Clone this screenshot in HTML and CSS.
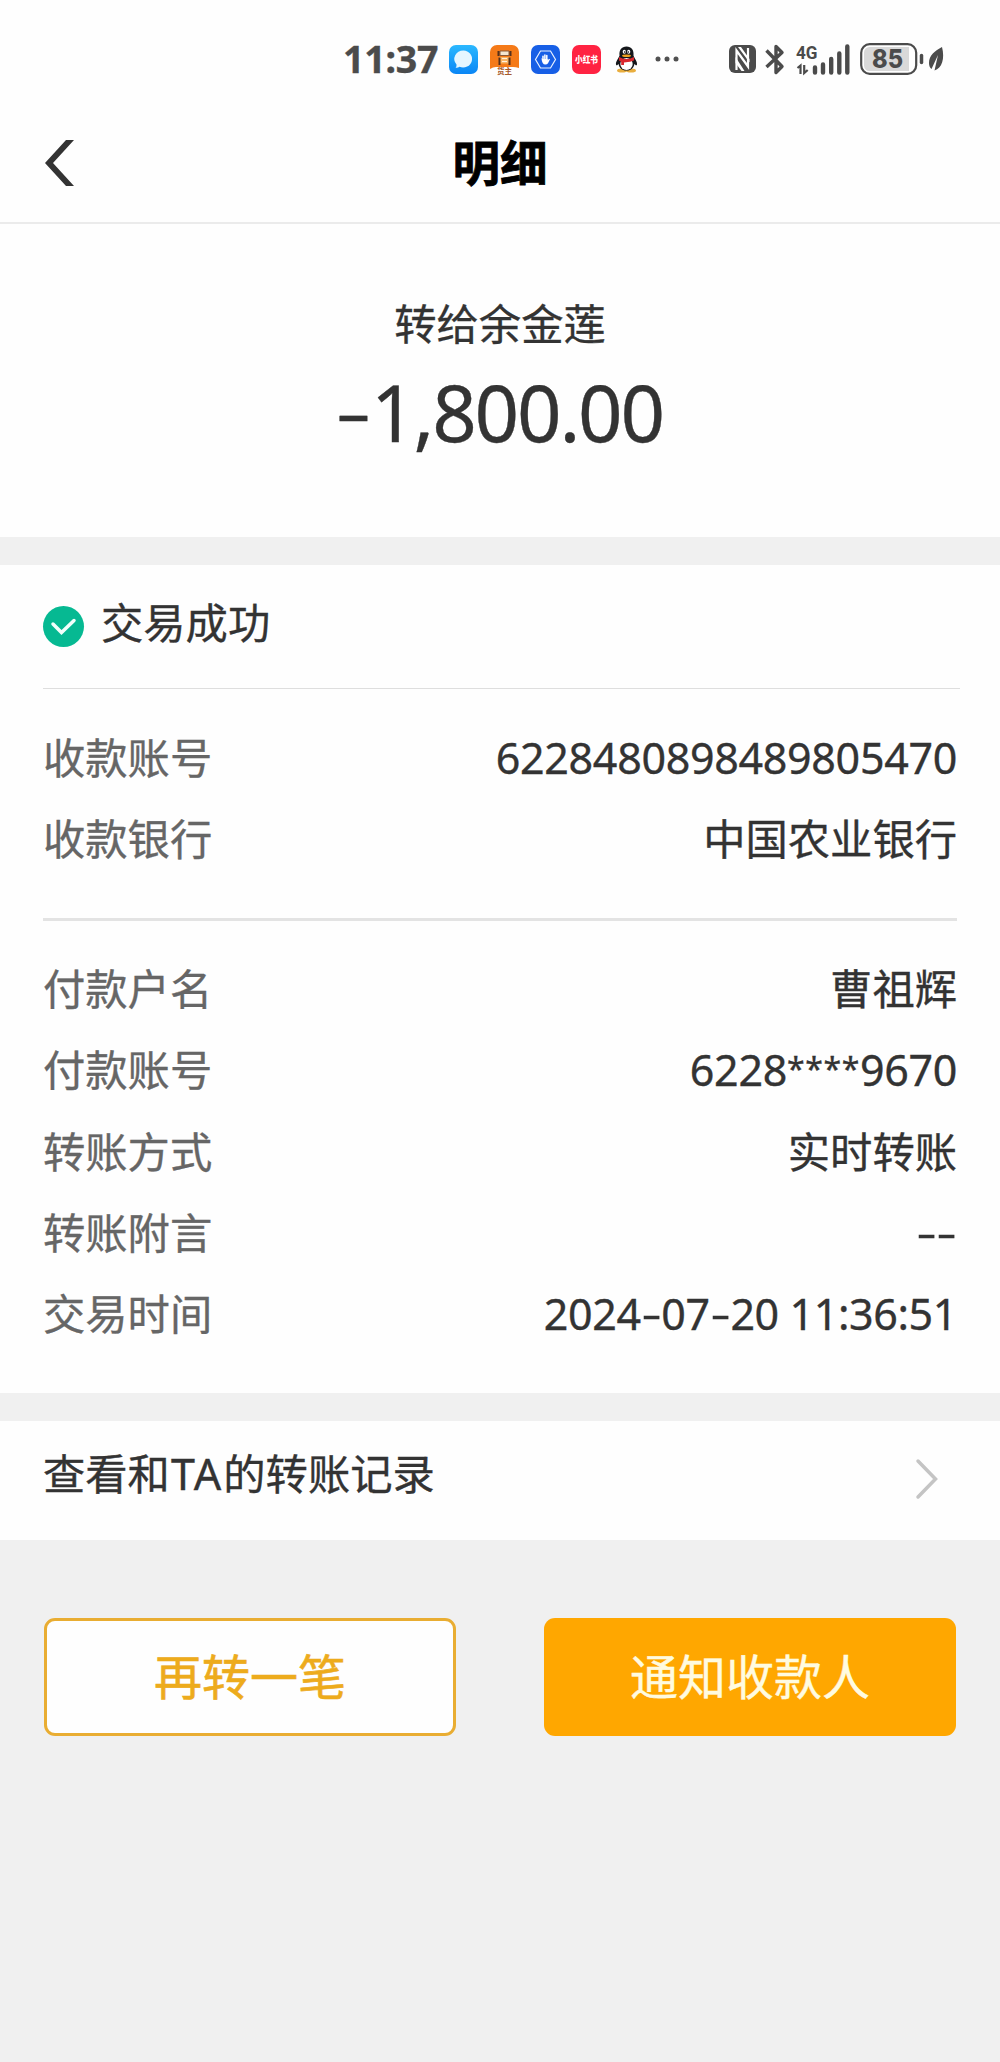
FILE: index.html
```html
<!DOCTYPE html>
<html lang="zh-CN">
<head>
<meta charset="utf-8">
<title>明细</title>
<link rel="stylesheet" href="styles.css">
</head>
<body>
<div class="status">
  <span class="time">11:37</span>
  <div class="apps">
    <svg width="29" height="29" viewBox="0 0 29 29">
      <defs><linearGradient id="msg" x1="0" y1="0" x2="0" y2="1"><stop offset="0" stop-color="#2bb8ff"/><stop offset="1" stop-color="#0a86f5"/></linearGradient></defs>
      <rect width="29" height="29" rx="7" fill="url(#msg)"/>
      <path d="M14.5 5.5a9 8.5 0 1 1-4 16.3Q8.800 23 6.600 22.700 7.900 21.300 7.500 19.500A9 8.500 0 0 1 14.500 5.500z" fill="#e6f6ff"/>
    </svg>
    <svg width="29" height="29" viewBox="0 0 29 29">
      <path d="M7 0h15a7 7 0 0 1 7 7v16q-3-1-6-1H6q-3 0-6 2V7a7 7 0 0 1 7-7z" fill="#f57a18"/>
      <path d="M10 6h9v4.500h-9z" fill="#f5e6d0" stroke="#8a5a3a" stroke-width="1"/>
      <path d="M9.500 12h10v6.500h-10z" fill="#f9b565"/>
      <path d="M8.500 6v5M20.500 6v5M9.500 12.500v7.500M19.500 12.500v7.500" stroke="#55301c" stroke-width="2"/>
      <path d="M12 13.500h5M12 16.500h5" stroke="#fff0df" stroke-width="1.200"/>
      <text x="14.500" y="28.500" text-anchor="middle" class="truck-name">货主</text>
    </svg>
    <svg width="29" height="29" viewBox="0 0 29 29">
      <rect width="29" height="29" rx="7" fill="#175fe6"/>
      <path d="M9.500 6h10l5 8.500-5 8.500h-10l-5-8.500z" fill="none" stroke="#e8f1ff" stroke-width="1.200"/>
      <path d="M12 15v-3.800M13.900 15v-5M15.800 15v-4.500" fill="none" stroke="#fff" stroke-width="1.500" stroke-linecap="round"/>
      <path d="M10.500 13.500q.7-.5 1 .5h5.200v1.500l1.300-1.700 1 .4-2 4q-.8 1.300-2.700 1.300-3.300 0-3.800-6z" fill="#fff"/>
    </svg>
    <svg width="29" height="29" viewBox="0 0 29 29">
      <rect width="29" height="29" rx="7" fill="#ff2342"/>
      <text x="14.500" y="17.800" text-anchor="middle" class="red-name" textLength="23" lengthAdjust="spacingAndGlyphs">小红书</text>
    </svg>
    <svg class="qq" width="23" height="29" viewBox="0 0 23 29">
      <ellipse cx="7" cy="25.500" rx="5" ry="2" fill="#e9ae3e"/><ellipse cx="16" cy="25.500" rx="5" ry="2" fill="#e9ae3e"/>
      <path d="M11.500 1.500c5 0 7.500 3.500 7 9 1 3 4 6 3.500 9-.5 2-2 0-2.500-.5-1 4-3 6.500-8 6.500s-7-2.500-8-6.500c-.5.5-2 2.500-2.500.5-.5-3 2.500-6 3.500-9-.500-5.500 2-9 7-9z" fill="#15171b"/>
      <ellipse cx="11.500" cy="19" rx="6.200" ry="6" fill="#fff"/>
      <ellipse cx="9.300" cy="6.700" rx="1.600" ry="2" fill="#fff"/><ellipse cx="13.700" cy="6.700" rx="1.600" ry="2" fill="#fff"/>
      <circle cx="9.700" cy="7" r=".8"/><circle cx="13.300" cy="7" r=".8"/>
      <ellipse cx="11.500" cy="10.700" rx="4.500" ry="1.300" fill="#f0a31f"/>
      <path d="M4 12q7.500 4 15 0v3.500q-4 1.700-8 1.700l-2 .2v2.500H6.200v-3.200L4 15.500z" fill="#d9272e"/>
    </svg>
    <svg class="more" width="24" height="29" viewBox="0 0 24 29" fill="#505050"><circle cx="3" cy="14" r="2.500"/><circle cx="12" cy="14" r="2.500"/><circle cx="21" cy="14" r="2.500"/></svg>
  </div>
  <div class="system">
    <svg width="27" height="28" viewBox="0 0 27 28">
      <rect width="27" height="28" rx="6" fill="#4b4b4b"/>
      <path d="M7.500 25V5.500L19 21.500V3" fill="none" stroke="#fff" stroke-width="2.200"/>
      <path d="M9 2h3l8.500 12v3.500zM6.500 12l9 14h-3l-6-8z" fill="#fff"/>
    </svg>
    <svg class="bt" width="20" height="31" viewBox="0 0 20 31"><path d="M1.500 6.500 17 22.500l-6 6v-26l6 6L1.500 23" fill="none" stroke="#4b4b4b" stroke-width="3.400" stroke-linejoin="round"/></svg>
    <svg class="signal" width="54" height="31" viewBox="0 0 54 31">
      <text x="0" y="14.500" class="net" textLength="21.500" lengthAdjust="spacingAndGlyphs">4G</text>
      <path d="M1.500 24 4.500 21.500V30M8.200 21v8l3.500-3" fill="none" stroke="#4b4b4b" stroke-width="2.200"/>
      <path d="M19 23.500v5M27 20.500v8M35.200 15v13.500M43.300 9.500v19M51.300 2.500v26" stroke="#4b4b4b" stroke-width="4.400" stroke-linecap="round"/>
    </svg>
    <svg class="battery" width="64" height="32" viewBox="0 0 64 32">
      <rect x="1.200" y="1.200" width="55" height="29.600" rx="8.500" fill="#fff" stroke="#4b4b4b" stroke-width="2.200"/>
      <path d="M9.500 4H49v24H9.500A5.500 5.500 0 0 1 4 22.500v-13A5.500 5.500 0 0 1 9.500 4z" fill="#d9d9d9"/>
      <text x="27.500" y="25" text-anchor="middle" class="charge" textLength="31" lengthAdjust="spacingAndGlyphs">85</text>
      <path d="M61.500 12.500v7" stroke="#4b4b4b" stroke-width="3.500" stroke-linecap="round"/>
    </svg>
    <svg class="leaf" width="16" height="26" viewBox="0 0 16 26"><path d="M14 1C7 5 1 9 1 17c0 3 1 5 2.500 6L10 9 6.500 24.500C14 22 17 13 14 1z" fill="#4b4b4b"/></svg>
  </div>
</div>
<header class="nav">
  <svg class="back" width="29" height="46" viewBox="0 0 29 46"><path d="M21 0h8L8 23l21 23h-8L0 23z" fill="#333"/></svg>
  <h1>明细</h1>
</header>
<section class="summary">
  <p class="payee">转给余金莲</p>
  <p class="amount"><span class="minus">-</span>1,800.00</p>
</section>
<main class="details">
  <div class="result">
    <svg width="41" height="41" viewBox="0 0 41 41"><circle cx="20.500" cy="20.500" r="20.500" fill="#06b992"/><path d="m10 18 8.500 8.500L31 14.500" fill="none" stroke="#f2fffb" stroke-width="3.500" stroke-linecap="round"/></svg>
    <span>交易成功</span>
  </div>
  <dl class="group to">
    <div><dt>收款账号</dt><dd class="num">6228480898489805470</dd></div>
    <div><dt>收款银行</dt><dd>中国农业银行</dd></div>
  </dl>
  <dl class="group from">
    <div><dt>付款户名</dt><dd>曹祖辉</dd></div>
    <div><dt>付款账号</dt><dd class="num">6228<span class="mask">****</span>9670</dd></div>
    <div><dt>转账方式</dt><dd>实时转账</dd></div>
    <div><dt>转账附言</dt><dd class="num"><span class="dash">-</span><span class="dash">-</span></dd></div>
    <div><dt>交易时间</dt><dd class="num date">2024<span class="dash">-</span>07<span class="dash">-</span>20 11:36:51</dd></div>
  </dl>
</main>
<a class="history"><span>查看和<span class="latin">TA</span>的转账记录</span>
  <svg width="22" height="40" viewBox="0 0 22 40"><path d="m2 2 17.500 18L2 38" fill="none" stroke="#c4c4c4" stroke-width="3.500" stroke-linecap="round"/></svg>
</a>
<div class="actions">
  <button class="again">再转一笔</button>
  <button class="notify">通知收款人</button>
</div>
</body>
</html>
```

FILE: styles.css
```css
* { box-sizing: border-box; margin: 0; padding: 0; }
body {
  width: 1000px;
  min-height: 2062px;
  background: #f0f0f0;
  color: #333;
  font-family: "Noto Sans", "Noto Sans CJK SC", sans-serif;
  font-size: 42.3px;
  -webkit-text-stroke: 0.35px currentColor;
}
svg { display: block; flex: none; overflow: visible; -webkit-text-stroke: 0; }

.status { display: flex; height: 118px; padding: 43px 0 0 343px; background: #fefefe; align-items: flex-start; }
.time { width: 106px; margin-top: -1px; font: 700 37.5px/33px "Noto Sans", sans-serif; letter-spacing: -0.200px; color: #4b4b4b; }
.apps { display: flex; gap: 12px; padding-top: 2px; width: 280px; }
.qq { margin-left: 2px; }
.more { margin-left: 5px; }
.truck-name { font: 700 7.500px "Noto Sans CJK SC", sans-serif; fill: #a65a2c; }
.red-name { font: 900 9.500px "Noto Sans CJK SC", sans-serif; fill: #fff; }
.system { display: flex; align-items: center; height: 32px; }
.bt { margin-left: 9px; }
.signal { margin-left: 11px; }
.net { font: 700 18px Roboto, sans-serif; fill: #4b4b4b; }
.battery { margin-left: 10px; }
.charge { font: 800 26px Inter, sans-serif; fill: #4b4b4b; }
.leaf { margin-left: 4px; }

.nav { display: grid; grid-template-columns: 100px 1fr 100px; align-items: center; height: 106px; padding-bottom: 14px; background: #fefefe; border-bottom: 2px solid #ebebeb; }
.back { margin-left: 45px; }
h1 { font: 700 47.500px/60px "Noto Sans CJK SC", sans-serif; text-align: center; color: #000; margin-top: -5px; -webkit-text-stroke: 0.800px #000; }

.summary { height: 313px; padding-top: 70px; text-align: center; background: #fefefe; }
.payee { line-height: 60px; }
.amount { font-size: 78px; line-height: 100px; letter-spacing: -2.200px; margin-top: 8px; }
.minus { display: inline-block; width: 34px; text-align: left; transform: translate(6px, -2px) scale(1.450, 0.850); }

.details { margin-top: 28px; height: 828px; padding: 0 43px; background: #fefefe; }
.result { display: flex; align-items: center; gap: 17px; height: 124px; border-bottom: 1px solid #dedede; margin-right: -3px; }
.result span { margin-top: -8px; line-height: 60px; }
.group div { display: flex; justify-content: space-between; height: 81.300px; line-height: 81.300px; }
.to { height: 232px; padding-top: 28px; border-bottom: 3px solid #e3e3e3; }
.from { padding-top: 27px; }
dt { color: #666; }
dd { white-space: pre; }
.num { font-size: 43px; letter-spacing: -0.320px; }
.mask { font-size: 32px; letter-spacing: 0.600px; vertical-align: 5px; line-height: 0; }
.dash { display: inline-block; width: 20.700px; text-align: center; transform: scale(1.450, 0.900); }
.date { letter-spacing: -0.400px; }

.history { display: flex; align-items: center; justify-content: space-between; margin-top: 28px; height: 119px; padding: 0 62px 4px 43px; background: #fefefe; }
.history > span { line-height: 60px; margin-top: -10px; }
.latin { font-size: 43px; letter-spacing: 2px; margin-left: 1px; }

.actions { display: flex; justify-content: space-between; padding: 78px 44px 0; }
button { width: 412px; height: 118px; border-radius: 11px; font: 400 48px/60px "Noto Sans CJK SC", sans-serif; padding-bottom: 6px; }
.again { background: #fefefe; border: 3px solid #e9ad32; color: #edab1c; -webkit-text-stroke: 0.600px #edab1c; }
.notify { background: #ffa700; border: 0; color: #fffbe0; -webkit-text-stroke: 0.400px #fffbe0; }
```
